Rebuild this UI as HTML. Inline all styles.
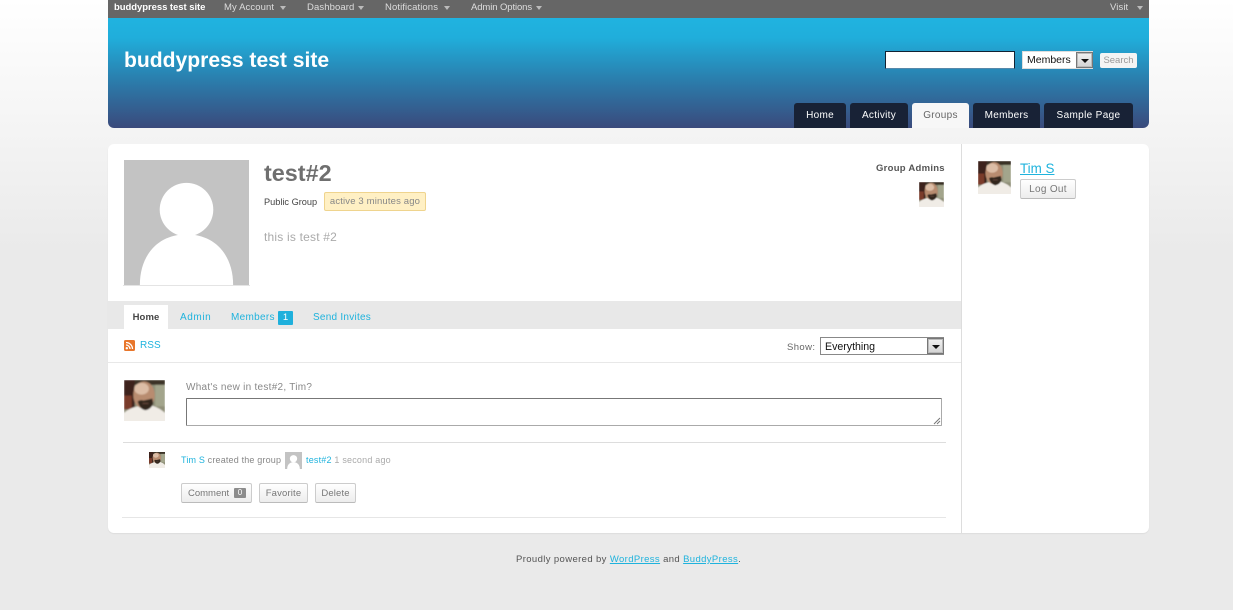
<!DOCTYPE html>
<html><head><meta charset="utf-8"><title>test#2</title>
<style>
html,body{margin:0;padding:0}
body{width:1233px;height:610px;position:relative;overflow:hidden;background:linear-gradient(#fff 0,#eaeaea 250px);font-family:"Liberation Sans",sans-serif;font-size:9.5px;color:#555}
.a{position:absolute;white-space:nowrap}
a{color:#1fb3dd;text-decoration:none}
.bar{left:108px;top:0;width:1041px;height:18px;background:#666}
.bar span{position:absolute;top:2px;font-size:9.5px;color:#ddd;white-space:nowrap;letter-spacing:.1px}
.tri{position:absolute;top:6px;width:0;height:0;border:3px solid transparent;border-top:4px solid #bbb;border-bottom:0}
.hdr{left:108px;top:18px;width:1041px;height:110px;border-radius:0 0 6px 6px;background:linear-gradient(#20b3e0 0,#20aedb 18%,#2a7fae 55%,#3a4a7c 100%)}
.tab{position:absolute;top:103px;height:25px;background:#182236;border-radius:3px 3px 0 0;color:#fff;font-size:10px;line-height:25px;text-align:center;letter-spacing:.3px}
.main{left:108px;top:144px;width:1041px;height:389px;background:#fff;border-radius:6px;box-shadow:0 1px 1px #ddd}
.btn{position:absolute;box-sizing:border-box;height:20px;border:1px solid #ccc;border-bottom-color:#bbb;border-radius:2px;background:linear-gradient(#fff,#ededed);font-size:9.5px;line-height:19px;color:#777;text-align:center;letter-spacing:.15px}
.sel{box-sizing:border-box;position:absolute;background:#fff;border:1px solid #999;color:#111;font-size:11px}
.arr{position:absolute;box-sizing:border-box;width:17px;background:linear-gradient(#f2f2f2,#d2d2d2);border:1px solid #777;outline:1px solid #bbb;outline-offset:-2px}
.arr:after{content:"";position:absolute;left:4px;top:6px;border:4px solid transparent;border-top:4px solid #111;border-bottom:0}
.nv{font-size:10px;line-height:12px;letter-spacing:.3px}
</style></head><body>
<svg width="0" height="0" style="position:absolute"><defs>
<filter id="bl" x="-5%" y="-5%" width="110%" height="110%"><feGaussianBlur stdDeviation="0.7"/></filter>
<symbol id="tim" viewBox="0 0 42 42">
<g filter="url(#bl)">
<rect width="42" height="42" fill="#8f8f78"/>
<rect width="42" height="5" fill="#3a3226"/>
<rect width="11" height="30" fill="#3e241b"/>
<rect x="0" y="16" width="8" height="14" fill="#7a3a2a"/>
<rect x="32" y="5" width="10" height="22" fill="#a3a58c"/>
<path d="M-1 43V35Q4 29 14 27L28 26Q38 29 43 35V43Z" fill="#f0ece6"/>
<ellipse cx="20.5" cy="15.500" rx="11" ry="14" fill="#b88c70"/>
<ellipse cx="18" cy="9" rx="7.500" ry="6" fill="#dcbda6"/>
<path d="M14 22Q16 20 20 21Q25 20 29 19L30 24Q28 30 22 31Q16 30 14 22Z" fill="#33261f"/>
<path d="M19 24H25" stroke="#6b4a3c" stroke-width="1"/>
</g>
</symbol>
<symbol id="ghost" viewBox="0 0 126 126">
<rect width="126" height="126" fill="#c3c3c3"/>
<circle cx="63" cy="50" r="27" fill="#fff"/>
<path d="M16 126C16 95 35 75 63 75S110 95 110 126Z" fill="#fff"/>
</symbol>
</defs></svg>

<div class="a bar">
<span style="left:6px;color:#fff;font-weight:bold;letter-spacing:-.05px">buddypress test site</span>
<span style="left:116px">My Account</span><i class="tri" style="left:172px"></i>
<span style="left:199px">Dashboard</span><i class="tri" style="left:250px"></i>
<span style="left:277px">Notifications</span><i class="tri" style="left:336px"></i>
<span style="left:363px;letter-spacing:-.1px">Admin Options</span><i class="tri" style="left:428px"></i>
<span style="left:1002px">Visit</span><i class="tri" style="left:1029px"></i>
</div>
<div class="a hdr"></div>
<div class="a" style="left:124px;top:48px;font-size:21.1px;line-height:26px;font-weight:bold;color:#fff">buddypress test site</div>
<div class="a" style="left:885px;top:51px;width:130px;height:18px;box-sizing:border-box;background:#fff;border:1px solid #123;border-bottom-color:#58a"></div>
<div class="sel" style="left:1022px;top:51px;width:71px;height:18px;border-color:#ddd;line-height:17px;padding-left:4px;font-size:10.5px">Members<i class="arr" style="left:53px;top:0;height:16px"></i></div>
<div class="a" style="left:1100px;top:53px;width:37px;height:15px;background:#f4f4f4;border-radius:2px;color:#999;font-size:9.5px;line-height:15px;text-align:center">Search</div>
<div class="tab" style="left:794px;width:52px">Home</div>
<div class="tab" style="left:850px;width:58px">Activity</div>
<div class="tab" style="left:912px;width:57px;background:#f7f7f7;color:#666">Groups</div>
<div class="tab" style="left:973px;width:67px">Members</div>
<div class="tab" style="left:1044px;width:89px;letter-spacing:.35px">Sample Page</div>

<div class="a main"></div>
<div class="a" style="left:961px;top:144px;width:1px;height:389px;background:#ddd"></div>
<svg class="a" style="left:124px;top:160px" width="125" height="125"><use href="#ghost" width="125" height="125"/></svg>
<div class="a" style="left:123px;top:285px;width:127px;height:1px;background:#e4e4e4"></div>
<div class="a" style="left:264px;top:159px;font-size:23.4px;line-height:28px;font-weight:bold;color:#6f6f6f">test#2</div>
<div class="a" style="left:264px;top:196px;font-size:9.2px;line-height:12px;color:#444">Public Group</div>
<div class="a" style="left:324px;top:192px;width:102px;height:19px;box-sizing:border-box;background:#fff0c4;border:1px solid #efd48e;border-radius:2px;font-size:9.5px;line-height:17px;color:#888;text-align:center;letter-spacing:.15px">active 3 minutes ago</div>
<div class="a" style="left:264px;top:229px;font-size:12px;line-height:16px;color:#aaa;letter-spacing:.2px">this is test #2</div>
<div class="a" style="left:876px;top:163px;font-size:9.5px;line-height:12px;font-weight:bold;color:#555;letter-spacing:.27px">Group Admins</div>
<svg class="a" style="left:919px;top:182px" width="25" height="25"><use href="#tim" width="25" height="25"/></svg>
<svg class="a" style="left:978px;top:161px" width="33" height="33"><use href="#tim" width="33" height="33"/></svg>
<a class="a" style="left:1020px;top:160px;font-size:13.4px;line-height:17px;text-decoration:underline">Tim S</a>
<div class="btn" style="left:1020px;top:179px;width:56px;font-size:10px;letter-spacing:.3px">Log Out</div>

<div class="a" style="left:108px;top:301px;width:853px;height:28px;background:#e8e8e8"></div>
<div class="a" style="left:124px;top:305px;width:44px;height:24px;background:#fff;font-size:9.5px;line-height:25px;text-align:center;font-weight:bold;color:#444;letter-spacing:.1px">Home</div>
<a class="a nv" style="left:180px;top:312px;letter-spacing:.6px">Admin</a>
<a class="a nv" style="left:231px;top:312px">Members</a>
<div class="a" style="left:278px;top:311px;width:15px;height:14px;background:#1fb0dc;border-radius:1px;color:#fff;font-size:9.5px;line-height:14px;text-align:center">1</div>
<a class="a nv" style="left:313px;top:312px;letter-spacing:.25px">Send Invites</a>

<svg class="a" style="left:124px;top:340px" width="11" height="11" viewBox="0 0 11 11"><rect width="11" height="11" rx="1.5" fill="#e8762b"/><circle cx="2.8" cy="8.2" r="1.2" fill="#fff"/><path d="M2 5a4 4 0 0 1 4 4M2 2.5A6.5 6.5 0 0 1 8.5 9" fill="none" stroke="#fff" stroke-width="1.3"/></svg>
<a class="a" style="left:140px;top:339px;font-size:10px;line-height:13px;letter-spacing:.05px">RSS</a>
<div class="a" style="left:787px;top:341px;line-height:13px;font-size:9.5px;color:#666;letter-spacing:.4px">Show:</div>
<div class="sel" style="left:820px;top:337px;width:124px;height:18px;line-height:18px;padding-left:4px;font-size:10.6px;border-color:#888">Everything<i class="arr" style="left:106px;top:0;height:16px"></i></div>
<div class="a" style="left:108px;top:362px;width:853px;height:1px;background:#e8e8e8"></div>

<svg class="a" style="left:124px;top:380px" width="41" height="41"><use href="#tim" width="41" height="41"/></svg>
<div class="a" style="left:186px;top:382px;font-size:10px;line-height:12px;color:#888;letter-spacing:.27px">What's new in test#2, Tim?</div>
<div class="a" style="left:186px;top:398px;width:756px;height:28px;box-sizing:border-box;background:#fff;border:1px solid #777;border-bottom-color:#aaa;border-right-color:#aaa;border-radius:1px"></div>
<svg class="a" style="left:933px;top:417px" width="8" height="8" viewBox="0 0 8 8"><path d="M1 7L7 1M4 7L7 4" stroke="#777" stroke-width="1"/></svg>
<div class="a" style="left:123px;top:442px;width:823px;height:1px;background:#ddd"></div>

<svg class="a" style="left:149px;top:452px" width="16" height="16"><use href="#tim" width="16" height="16"/></svg>
<div class="a" style="left:181px;top:454px;font-size:9px;line-height:12px;color:#888;letter-spacing:.17px"><a>Tim S</a> created the group</div>
<svg class="a" style="left:285px;top:452px" width="17" height="17"><use href="#ghost" width="17" height="17"/></svg>
<div class="a" style="left:306px;top:454px;font-size:9px;line-height:12px;color:#aaa;letter-spacing:.2px"><a>test#2</a> 1 second ago</div>
<div class="btn" style="left:181px;top:483px;width:71px;text-align:left;padding-left:6px;font-size:9.5px;letter-spacing:0">Comment<i style="position:absolute;left:52px;top:4px;width:12px;height:10px;background:#8c8c8c;border-radius:1px;color:#fff;font-style:normal;font-size:8px;line-height:10px;text-align:center">0</i></div>
<div class="btn" style="left:259px;top:483px;width:49px">Favorite</div>
<div class="btn" style="left:315px;top:483px;width:41px">Delete</div>
<div class="a" style="left:122px;top:517px;width:824px;height:1px;background:#e6e6e6"></div>

<div class="a" style="left:516px;top:554px;font-size:9.5px;line-height:12px;color:#555;letter-spacing:.38px">Proudly powered by <a style="text-decoration:underline">WordPress</a> and <a style="text-decoration:underline">BuddyPress</a>.</div>
</body></html>
